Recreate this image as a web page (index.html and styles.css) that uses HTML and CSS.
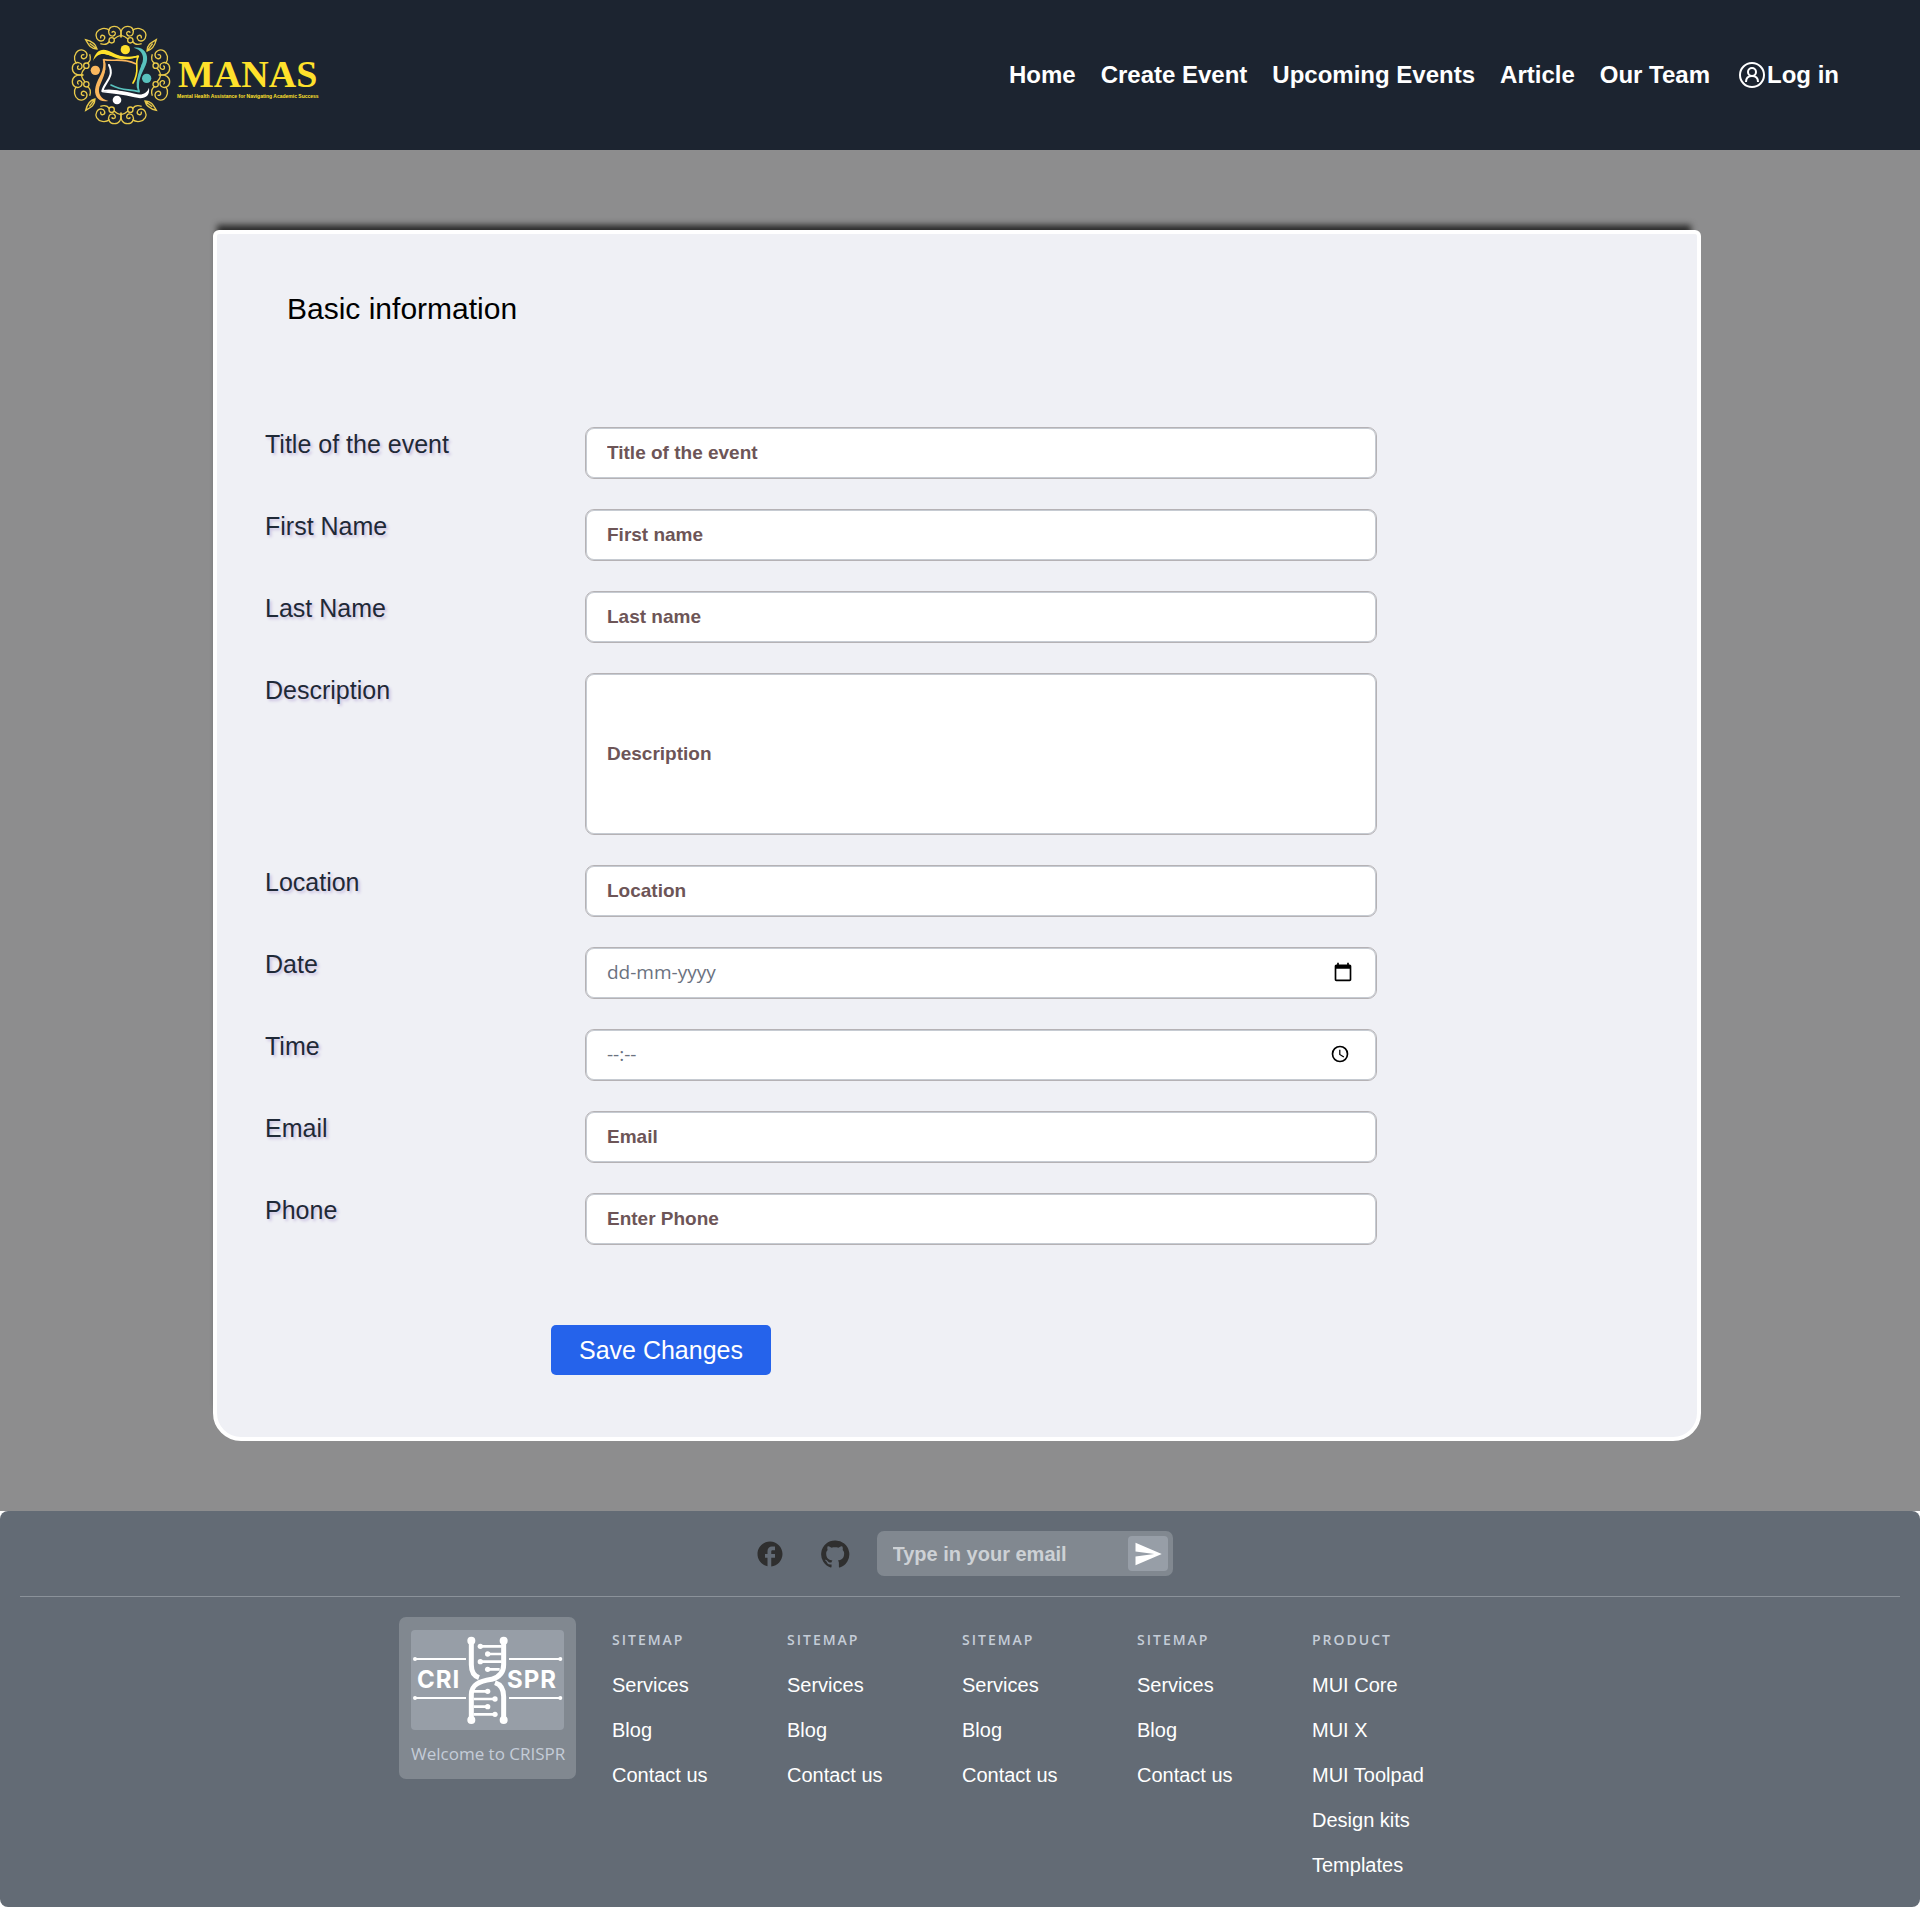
FILE: index.html
```html
<!DOCTYPE html>
<html lang="en">
<head>
<meta charset="utf-8">
<title>MANAS - Create Event</title>
<meta name="viewport" content="width=device-width, initial-scale=1">
<link rel="stylesheet" href="styles.css">
</head>
<body>
<header class="topbar">
  <a class="brand" href="#" aria-label="MANAS home">
    <svg class="brand-logo" width="252" height="100" viewBox="0 0 252 100" fill="none">
      <defs>
        <g id="scroll">
          <path d="M0-113C3-136-7-146-20-146C-35-146-40-133-36-124C-32-114-19-115-17-124C-16-131-25-133-28-127"/>
          <path d="M-34-134C-48-144-66-140-73-128C-79-116-71-101-59-102C-48-103-45-116-54-119C-60-120-63-114-60-110"/>
          <path d="M-21-108Q-10-118 0-119M-35-101C-40-92-50-90-62-94"/>
          <circle cx="-28" cy="-104" r="8"/>
        </g>
        <g id="quarter">
          <use href="#scroll"/>
          <use href="#scroll" transform="scale(-1 1)"/>
          <path d="M-72-78C-92-78-98-92-106-106C-90-102-76-96-72-78ZM-72-78L-94-95"/>
        </g>
      </defs>
      <g transform="translate(51 50) scale(.3333)">
        <g stroke="#e8c94a" stroke-width="4">
          <use href="#quarter"/>
          <use href="#quarter" transform="rotate(90)"/>
          <use href="#quarter" transform="rotate(180)"/>
          <use href="#quarter" transform="rotate(270)"/>
        </g>
        <g stroke-linecap="round" stroke-linejoin="round">
          <path stroke="#ffe12b" stroke-width="5" d="M-60-66C-36-70-10-42 52-56C38-34 60-14 36 24"/>
          <path stroke="#58c1bd" stroke-width="5" d="M64-30C66-4 38 16 54 50C22 40 8 50-30 30"/>
          <path stroke="#fff" stroke-width="6" d="M40 62C4 54-20 42-56 48C-50 22-18 6-36-30"/>
          <path stroke="#fbb75e" stroke-width="5" d="M-68 30C-64 6-38-12-52-46C-22-40 4-52 44-34"/>
        </g>
        <path fill="#ffe12b" d="M-84-42C-76-76-54-84-28-68C0-52 28-50 56-61C34-42-4-44-32-58C-56-68-72-64-84-42Z"/>
        <path fill="#58c1bd" d="M38-82C66-86 84-66 77-38C70-12 46 10 57 54C38 16 56-12 65-40C70-60 60-76 38-82Z"/>
        <path fill="#fff" d="M84 38C88 66 68 74 40 67C8 58-24 56-58 52C-26 42 10 48 42 56C62 62 78 56 84 38Z"/>
        <path fill="#fbb75e" d="M-38 78C-66 84-84 64-76 34C-70 8-46-12-55-48C-38-14-54 6-65 36C-70 56-60 72-38 78Z"/>
        <circle cx="13" cy="-76" r="14" fill="#ffe12b"/>
        <circle cx="77" cy="10" r="14" fill="#58c1bd"/>
        <circle cx="-12" cy="75" r="13" fill="#fff"/>
        <circle cx="-77" cy="-14" r="14" fill="#fbb75e"/>
      </g>
      <text class="brand-name" x="108" y="62">MANAS</text>
      <text class="brand-tag" x="107" y="73">Mental Health Assistance for Navigating Academic Success</text>
    </svg>
  </a>
  <nav class="menu" aria-label="Main">
    <a href="#">Home</a>
    <a href="#">Create Event</a>
    <a href="#">Upcoming Events</a>
    <a href="#">Article</a>
    <a href="#">Our Team</a>
    <a class="login" href="#">
      <svg width="32" height="32" viewBox="0 0 32 32" fill="none" stroke="#fff" stroke-width="2">
        <circle cx="17" cy="16" r="12"/>
        <circle cx="17" cy="13" r="4"/>
        <path d="M11 23C11 19 13 17 17 17S23 19 23 23"/>
      </svg>Log in</a>
  </nav>
</header>

<main class="page">
  <form class="card">
    <h1 class="card-title">Basic information</h1>
    <div class="fields">
      <div class="row"><label for="title">Title of the event</label><input id="title" class="field" type="text" placeholder="Title of the event"></div>
      <div class="row"><label for="first">First Name</label><input id="first" class="field" type="text" placeholder="First name"></div>
      <div class="row"><label for="last">Last Name</label><input id="last" class="field" type="text" placeholder="Last name"></div>
      <div class="row"><label for="description">Description</label><input id="description" class="field field-tall" type="text" placeholder="Description"></div>
      <div class="row"><label for="location">Location</label><input id="location" class="field" type="text" placeholder="Location"></div>
      <div class="row"><label for="date">Date</label>
        <div class="field picker">
          <input id="date" type="text" placeholder="dd-mm-yyyy">
          <button type="button" aria-label="Choose a date">
            <svg width="20" height="20" viewBox="0 0 24 24"><path d="M20 3h-1V1h-2v2H7V1H5v2H4c-1.100 0-2 .9-2 2v16c0 1.100.9 2 2 2h16c1.100 0 2-.9 2-2V5c0-1.100-.9-2-2-2zm0 18H4V8h16v13z"/></svg>
          </button>
        </div>
      </div>
      <div class="row"><label for="time">Time</label>
        <div class="field picker">
          <input id="time" type="text" placeholder="--:--">
          <button class="clock" type="button" aria-label="Choose a time">
            <svg width="20" height="20" viewBox="0 0 24 24"><path d="M12 2a10 10 0 1 0 0 20 10 10 0 0 0 0-20zm0 18a8 8 0 1 1 0-16 8 8 0 0 1 0 16zm.5-13H11v6l5.200 3.200.8-1.300-4.500-2.700z"/></svg>
          </button>
        </div>
      </div>
      <div class="row"><label for="email">Email</label><input id="email" class="field" type="email" placeholder="Email"></div>
      <div class="row"><label for="phone">Phone</label><input id="phone" class="field" type="tel" placeholder="Enter Phone"></div>
    </div>
    <button class="save" type="submit">Save Changes</button>
  </form>
</main>

<footer class="footer">
  <div class="contact">
    <a href="#" aria-label="Facebook">
      <svg width="30" height="30" viewBox="0 0 24 24"><path d="M22 12c0-5.520-4.480-10-10-10S2 6.480 2 12c0 4.840 3.440 8.870 8 9.800V15H8v-3h2V9.500C10 7.570 11.570 6 13.500 6H16v3h-2c-.55 0-1 .45-1 1v2h3v3h-3v6.950c5.050-.5 9-4.760 9-9.950z"/></svg>
    </a>
    <a href="#" aria-label="GitHub">
      <svg width="30" height="30" viewBox="0 0 24 24"><path d="M12 1.270a11 11 0 0 0-3.480 21.460c.55.090.73-.28.730-.55v-1.840c-3.030.64-3.670-1.460-3.670-1.460-.55-1.290-1.280-1.650-1.280-1.650-.92-.65.1-.65.1-.65 1.100 0 1.730 1.100 1.730 1.100.92 1.650 2.570 1.200 3.210.92a2 2 0 0 1 .64-1.470c-2.470-.27-5.040-1.190-5.040-5.500 0-1.100.46-2.100 1.200-2.840a3.760 3.760 0 0 1 0-2.930s.91-.28 3.110 1.100c1.800-.49 3.700-.49 5.500 0 2.100-1.380 3.020-1.100 3.020-1.100.64 1.100.55 2.100.37 2.930.73.74 1.190 1.740 1.190 2.840 0 4.310-2.570 5.230-5.040 5.500.45.370.82.920.82 2.020v3.030c0 .27.1.64.730.55A11 11 0 0 0 12 1.270"/></svg>
    </a>
    <form class="subscribe">
      <input type="email" placeholder="Type in your email" aria-label="Type in your email">
      <button type="submit" aria-label="Send">
        <svg width="30" height="30" viewBox="0 0 24 24" fill="#fff"><path d="M2.010 21 23 12 2.010 3 2 10l15 2-15 2z"/></svg>
      </button>
    </form>
  </div>
  <div class="links">
    <div class="crispr">
      <svg width="153" height="100" viewBox="0 0 153 100" role="img" aria-label="CRISPR">
        <rect width="153" height="100" rx="4" fill="#979ea7"/>
        <g transform="scale(.3333)" fill="none" stroke="#fff" stroke-width="6">
          <path d="M12 87H165M294 87H448M12 204H165M294 204H448"/>
          <path d="M208 49H272M230 72H272M208 95H272M230 118H266M188 184H230M188 207H252M188 230H230M188 253H252" stroke-width="8"/>
          <path d="M278 34V104C278 130 262 142 242 148C204 154 181 164 181 194V270" stroke-width="15"/>
          <path d="M181 34V104C181 126 190 138 204 143M252 158C270 164 278 178 278 200V270" stroke-width="15"/>
          <g fill="#fff" stroke="none">
            <circle cx="181" cy="32" r="12"/><circle cx="278" cy="32" r="12"/>
            <circle cx="181" cy="270" r="12"/><circle cx="278" cy="270" r="12"/>
            <circle cx="208" cy="49" r="8"/><circle cx="230" cy="72" r="8"/><circle cx="208" cy="95" r="8"/><circle cx="230" cy="118" r="8"/>
            <circle cx="230" cy="184" r="8"/><circle cx="252" cy="207" r="8"/><circle cx="230" cy="230" r="8"/><circle cx="252" cy="253" r="8"/>
            <circle cx="12" cy="87" r="6"/><circle cx="448" cy="87" r="6"/><circle cx="12" cy="204" r="6"/><circle cx="448" cy="204" r="6"/>
          </g>
        </g>
        <text class="crispr-text" x="6" y="58">CRI</text>
        <text class="crispr-text" x="96" y="58">SPR</text>
      </svg>
      <p>Welcome to CRISPR</p>
    </div>
    <section class="col">
      <h2>SITEMAP</h2>
      <ul><li><a href="#">Services</a></li><li><a href="#">Blog</a></li><li><a href="#">Contact us</a></li></ul>
    </section>
    <section class="col">
      <h2>SITEMAP</h2>
      <ul><li><a href="#">Services</a></li><li><a href="#">Blog</a></li><li><a href="#">Contact us</a></li></ul>
    </section>
    <section class="col">
      <h2>SITEMAP</h2>
      <ul><li><a href="#">Services</a></li><li><a href="#">Blog</a></li><li><a href="#">Contact us</a></li></ul>
    </section>
    <section class="col">
      <h2>SITEMAP</h2>
      <ul><li><a href="#">Services</a></li><li><a href="#">Blog</a></li><li><a href="#">Contact us</a></li></ul>
    </section>
    <section class="col">
      <h2>PRODUCT</h2>
      <ul><li><a href="#">MUI Core</a></li><li><a href="#">MUI X</a></li><li><a href="#">MUI Toolpad</a></li><li><a href="#">Design kits</a></li><li><a href="#">Templates</a></li></ul>
    </section>
  </div>
</footer>
</body>
</html>
```
FILE: styles.css
```css
* { box-sizing: border-box; }

body {
  margin: 0;
  background: #fff;
  font-family: "Liberation Sans", Arial, sans-serif;
}

a { color: inherit; text-decoration: none; }
svg { display: block; }
button, input { font-family: inherit; margin: 0; }
h1, h2, p, ul { margin: 0; padding: 0; font-weight: 400; }
ul { list-style: none; }

/* Header */
.topbar {
  display: flex;
  align-items: center;
  justify-content: space-between;
  min-height: 150px;
  padding: 0 81px 0 70px;
  background: #1c2430;
  color: #fff;
}
.brand-name {
  font: bold 38px "Liberation Serif", "Times New Roman", serif;
  fill: #ffe12b;
}
.brand-tag {
  font: bold 5px "Liberation Sans", Arial, sans-serif;
  fill: #ffe12b;
}
.menu {
  display: flex;
  align-items: center;
  gap: 25px;
  font-size: 24px;
  font-weight: 700;
}
.login { display: flex; align-items: center; }

/* Event form */
.page {
  padding: 80px 219px 70px 213px;
  background: #8d8d8e;
}
.card {
  padding: 57px 48px 62px;
  border: 4px solid #fff;
  border-radius: 6px 6px 28px 28px;
  background: #eff0f5;
  box-shadow: -3px -12px 6px -7px #2b2b2b;
}
.card-title {
  padding-left: 22px;
  font-size: 30px;
  line-height: 36px;
  color: #000;
}
.fields {
  display: grid;
  gap: 30px;
  margin-top: 100px;
}
.row {
  display: grid;
  grid-template-columns: 320px minmax(0, 792px);
  align-items: start;
}
.row label {
  font-size: 25px;
  line-height: 34px;
  color: #1f2937;
  text-shadow: 2px 2px 3px #c9bfe0;
}
.field {
  width: 100%;
  height: 52px;
  padding: 0 21px;
  border: 1px solid #b5b2b5;
  border-radius: 9px;
  background: #fff;
  box-shadow: inset 0 0 0 1px #c6cbd2;
  font-size: 19px;
  font-weight: 700;
  color: #1f2937;
  outline: 0;
}
.field::placeholder { color: #6d5557; opacity: 1; }
.field-tall { height: 162px; }
.picker {
  display: flex;
  align-items: center;
  justify-content: space-between;
  padding-bottom: 2px;
}
.picker input {
  flex: 1;
  min-width: 0;
  padding: 0;
  border: 0;
  background: none;
  outline: 0;
  font: 19px "Open Sans", "Noto Sans", sans-serif;
}
.picker input::placeholder { color: #6b7280; opacity: 1; }
.picker button {
  padding: 0 2px;
  border: 0;
  background: none;
}
.picker .clock { padding-right: 5px; }
.save {
  display: block;
  width: 220px;
  height: 50px;
  margin: 80px 0 0 286px;
  padding: 0;
  border: 0;
  border-radius: 5px;
  background: #2563eb;
  color: #fff;
  font-size: 25px;
}

/* Footer */
.footer {
  padding: 20px 20px 19px;
  border-radius: 8px;
  background: #636b75;
}
.contact {
  display: flex;
  align-items: center;
  justify-content: center;
  gap: 35px;
  padding: 0 0 20px 7px;
  border-bottom: 1px solid #8b929a;
  fill: #2f2f2f;
}
.subscribe {
  display: flex;
  align-items: center;
  width: 296px;
  height: 45px;
  margin-left: -8px;
  padding: 0 5px 0 16px;
  border-radius: 7px;
  background: #818890;
}
.subscribe input {
  flex: 1;
  min-width: 0;
  padding: 2px 0 0;
  border: 0;
  background: none;
  outline: 0;
  font-size: 20px;
  font-weight: 700;
  color: #fff;
}
.subscribe input::placeholder { color: #cdd1d5; opacity: 1; }
.subscribe button {
  display: grid;
  place-items: center;
  width: 40px;
  height: 35px;
  padding: 0;
  border: 0;
  border-radius: 4px;
  background: #979ea7;
}
.links {
  display: flex;
  align-items: flex-start;
  justify-content: center;
  padding: 20px 34px 0 0;
}
.crispr {
  width: 177px;
  margin-right: 36px;
  padding: 13px 12px 10px;
  border-radius: 7px;
  background: #818890;
}
.crispr-text {
  font: bold 24px Inter, sans-serif;
  letter-spacing: 1px;
  fill: #fff;
}
.crispr p {
  padding-top: 9px;
  font: 17px/30px "Open Sans", "Noto Sans", sans-serif;
  text-align: center;
  white-space: nowrap;
  color: #c5cdd8;
}
.col { width: 175px; }
.col h2 {
  font: 600 14px/46px "Open Sans", "Noto Sans", sans-serif;
  letter-spacing: 2px;
  color: #c5cdd8;
}
.col li {
  font-size: 20px;
  line-height: 45px;
  color: #fff;
}
```
